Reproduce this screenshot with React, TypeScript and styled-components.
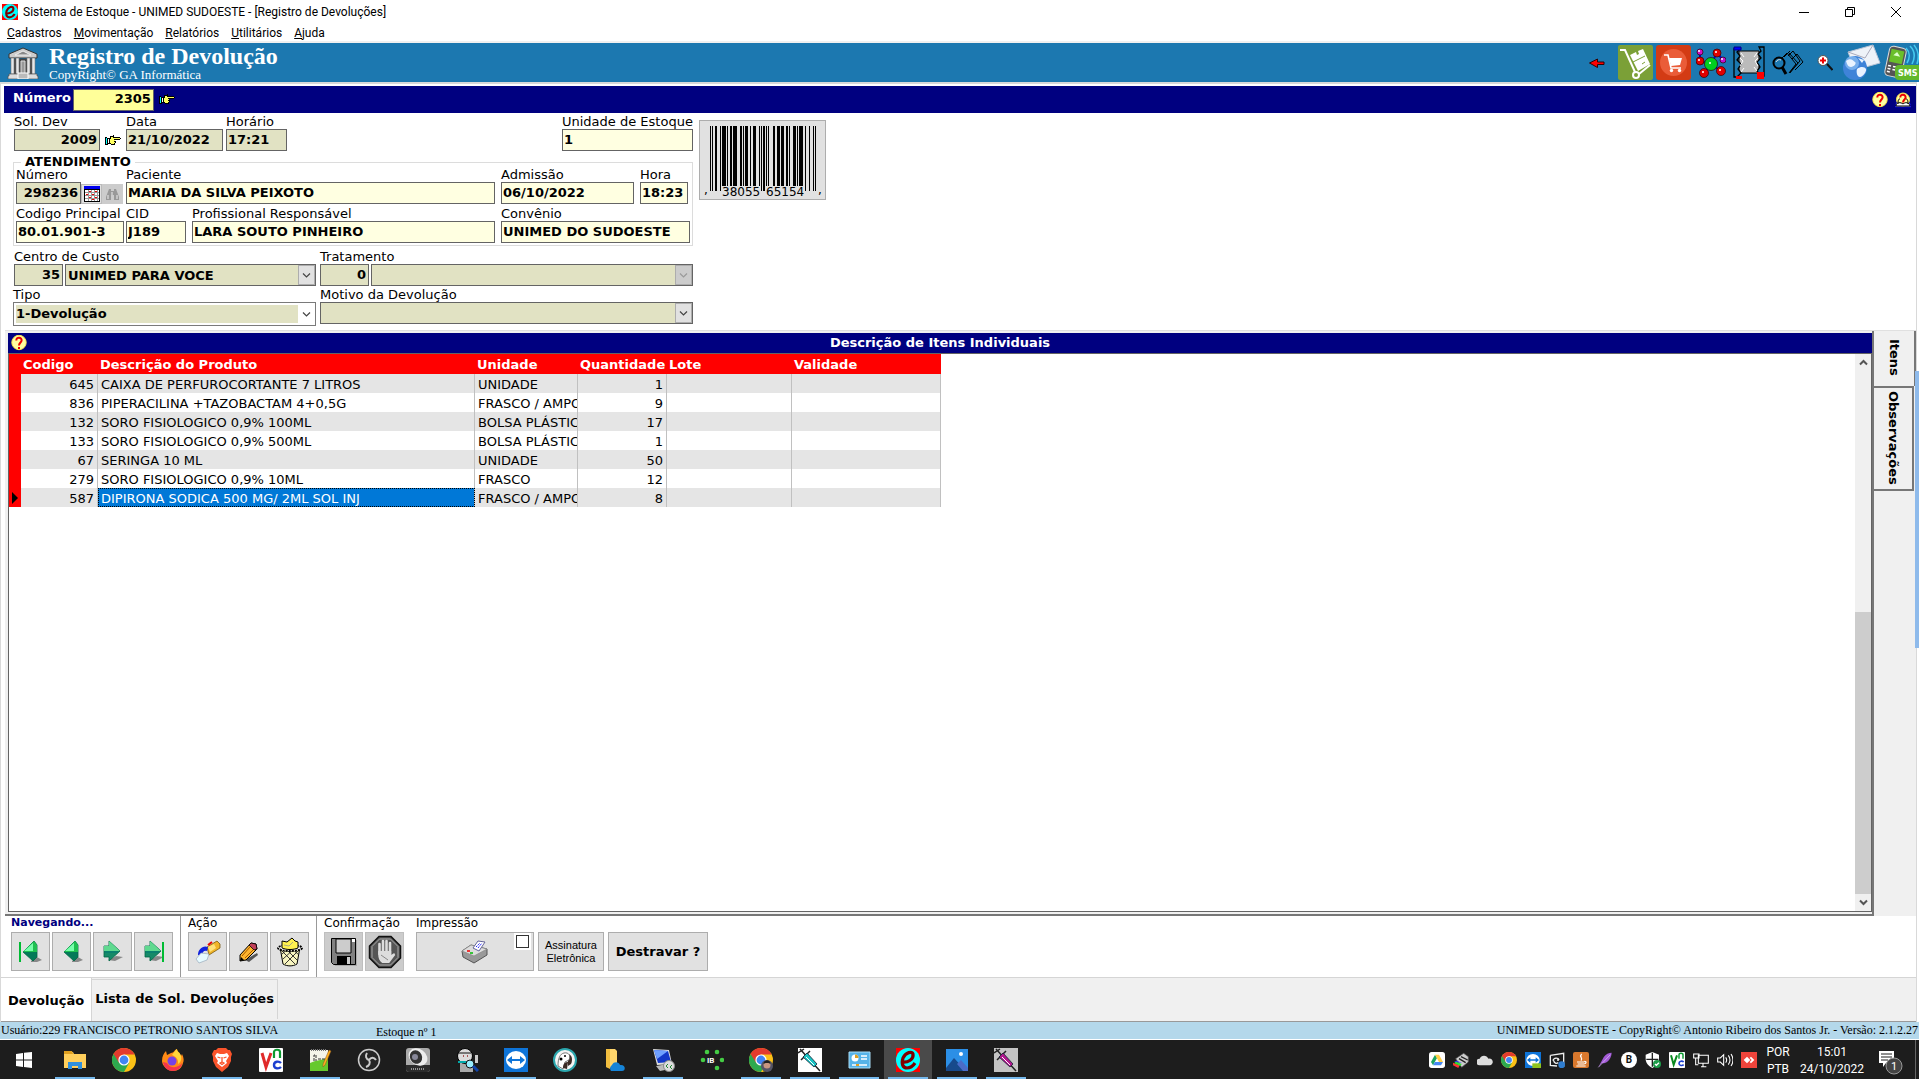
import React, { useId } from 'react';
import styled, { createGlobalStyle, css } from 'styled-components';

const color = {
  navy: '#000080',
  header: '#1c78b0',
  face: '#f0f0f0',
  button: '#e1e1e1',
  edge: '#adadad',
  fieldEdge: '#646464',
  readOnly: '#e1e2c3',
  pale: '#ffffe1',
  status: '#b4d8eb',
};

const GlobalStyle = createGlobalStyle`
  * { box-sizing: border-box; }
  body { margin: 0; background: #fff; color: #000; font: 13px/15px Verdana, "DejaVu Sans", sans-serif; }
  button, input, select { font: inherit; color: inherit; margin: 0; border-radius: 0; }
  svg { display: block; flex: none; }
`;

const Window = styled.div`
  display: flex;
  flex-direction: column;
  height: 100vh;
  min-height: 720px;
  overflow: hidden;
`;

/* ---------- title and menu ---------- */
const TitleBar = styled.header`
  display: flex;
  align-items: center;
  gap: 5px;
  height: 23px;
  padding-left: 2px;
  font: 12px/16px "Segoe UI", Roboto, sans-serif;
`;
const WindowButtons = styled.div`
  display: flex;
  margin-left: auto;
`;
const WindowButton = styled.button`
  display: grid;
  place-items: center;
  width: 46px;
  height: 21px;
  padding: 0;
  border: 0;
  background: none;
`;
const MenuBar = styled.nav`
  display: flex;
  gap: 12px;
  height: 20px;
  padding: 2px 7px;
  border-bottom: 2px solid ${color.face};
  font: 12px/16px "Segoe UI", Roboto, sans-serif;
`;
const MenuLink = styled.a`
  color: #000;
  text-decoration: none;
  &::first-letter { text-decoration: underline; }
  display: inline-block;
`;

/* ---------- blue banner ---------- */
const Banner = styled.div`
  display: flex;
  align-items: center;
  gap: 10px;
  height: 39px;
  flex: none;
  padding-left: 7px;
  background: ${color.header};
  color: #fff;
  font-family: "Liberation Serif", "Times New Roman", serif;
`;
const BannerTitle = styled.h1`
  margin: 0;
  font-size: 24px;
  line-height: 24px;
`;
const BannerNote = styled.p`
  margin: 0;
  font-size: 13px;
  line-height: 13px;
`;
const BannerTools = styled.div`
  display: flex;
  align-items: center;
  margin-left: auto;
`;
const ToolButton = styled.button<{ $w: number }>`
  display: grid;
  place-items: center;
  width: ${p => p.$w}px;
  height: 37px;
  padding: 0;
  border: 0;
  background: none;
`;

/* ---------- document ---------- */
const Document = styled.main`
  position: relative;
  display: flex;
  flex-direction: column;
  flex: 1;
  min-height: 0;
  margin-right: 2px;
  padding-top: 2px;
  border: solid #d9d9d9;
  border-width: 2px 1px 0;
`;
const NumberBar = styled.div`
  display: flex;
  align-items: center;
  gap: 2px;
  height: 27px;
  flex: none;
  margin: 0 0 0 3px;
  padding: 0 5px 0 9px;
  background: ${color.navy};
  color: #fff;
  font-weight: bold;
`;
const NumberLabel = styled.label`
  padding-bottom: 4px;
`;
const HelpButtons = styled.div`
  display: flex;
  gap: 7px;
  margin-left: auto;
`;
const NumberInput = styled.input`
  width: 81px;
  height: 22px;
  padding: 0 2px 2px;
  border: 1px solid ${color.fieldEdge};
  background: #ffff99;
  color: #000;
  font-weight: bold;
  text-align: right;
`;
const IconButton = styled.button<{ $w?: number }>`
  display: grid;
  place-items: center;
  height: 22px;
  width: ${p => p.$w ?? 16}px;
  padding: 0;
  border: 0;
  background: none;
`;

const FormArea = styled.div`
  display: flex;
  gap: 6px;
  padding: 1px 0 4px 12px;
`;
const Form = styled.form`
  width: 680px;
`;
const Row = styled.div<{ $gap?: number; $top?: number; $indent?: number; $hang?: boolean }>`
  display: flex;
  align-items: ${p => (p.$hang ? 'flex-start' : 'flex-end')};
  gap: ${p => p.$gap ?? 3}px;
  padding-top: ${p => p.$top ?? 0}px;
  padding-left: ${p => p.$indent ?? 0}px;
`;
const FieldBox = styled.div<{ $w: number; $end?: boolean }>`
  display: flex;
  flex-direction: column;
  width: ${p => p.$w}px;
  ${p => p.$end && css`margin-left: auto;`}
`;
const Label = styled.label`
  height: 15px;
  line-height: 15px;
  white-space: nowrap;
`;
const fieldLook = css<{ $tone?: 'pale' }>`
  height: 22px;
  border: 1px solid ${color.fieldEdge};
  background: ${p => (p.$tone === 'pale' ? color.pale : color.readOnly)};
  font-weight: bold;
`;
const TextInput = styled.input<{ $tone?: 'pale'; $right?: boolean }>`
  ${fieldLook}
  width: 100%;
  padding: 0 2px 2px 1px;
  text-align: ${p => (p.$right ? 'right' : 'left')};
`;
const ComboBox = styled.span<{ $w: number }>`
  display: grid;
  width: ${p => p.$w}px;
`;
const Select = styled.select<{ $open?: boolean }>`
  ${fieldLook}
  grid-area: 1 / 1;
  width: 100%;
  padding: 0 2px;
  appearance: none;
  opacity: 1;
  color: #000;
  ${p => p.$open && css`
    height: 24px;
    padding: 0 2px 2px;
    border: 1px solid #7a7a7a;
    background: linear-gradient(90deg, ${color.readOnly} calc(100% - 17px), #fff 0);
    box-shadow: inset 0 0 0 2px #fff;
  `}
`;
const ComboArrow = styled.span<{ $flat?: boolean; $off?: boolean }>`
  grid-area: 1 / 1;
  justify-self: end;
  align-self: center;
  display: grid;
  place-items: center;
  width: 17px;
  height: 20px;
  margin-right: 1px;
  border: ${p => (p.$flat ? '0' : `1px solid ${color.edge}`)};
  background: ${p => (p.$flat ? '#fff' : p.$off ? '#ccc' : color.button)};
  color: ${p => (p.$off ? '#9a9a9a' : '#444')};
  pointer-events: none;
`;
const Group = styled.fieldset`
  min-width: 0;
  margin: 6px 0 0;
  padding: 0 2px 2px;
  border: 1px solid #dcdcdc;
`;
const Legend = styled.legend`
  margin-left: 5px;
  padding: 0 4px;
  line-height: 10px;
  font-weight: bold;
`;
const SmallButton = styled.button<{ $off?: boolean }>`
  display: grid;
  place-items: center;
  width: 21px;
  height: 20px;
  padding: 0;
  border: ${p => (p.$off ? '0' : '1px solid #bbb')};
  background: ${p => (p.$off ? '#ccc' : color.button)};
`;
const Joined = styled.div`
  display: flex;
  align-items: flex-end;
`;
const BarcodeButton = styled.button`
  width: 127px;
  height: 80px;
  margin-top: 6px;
  padding: 0;
  border: 1px solid ${color.edge};
  background: ${color.button};
`;

/* ---------- item panel ---------- */
const ItemPanel = styled.section`
  display: flex;
  flex: 1;
  min-height: 0;
  margin-left: 4px;
  border-top: 1px solid #e0e0e0;
  background: ${color.face};
`;
const ItemPage = styled.div`
  display: flex;
  flex-direction: column;
  flex: 1;
  min-width: 0;
  padding: 2px 0 2px 3px;
  border-right: 2px solid #777;
  border-bottom: 2px solid #777;
`;
const PanelHead = styled.div`
  display: flex;
  align-items: center;
  height: 20px;
  flex: none;
  padding: 0 3px;
  background: ${color.navy};
  color: #fff;
`;
const PanelTitle = styled.h2`
  flex: 1;
  margin: 0 16px 0 0;
  font-size: 13px;
  line-height: 20px;
  text-align: center;
`;
const GridBox = styled.div`
  display: flex;
  flex: 1;
  min-height: 0;
  border: 1px solid #646464;
  background: #fff;
`;
const GridScroll = styled.div`
  flex: 1;
  min-width: 0;
  overflow: hidden;
`;
const Table = styled.table`
  table-layout: fixed;
  width: 932px;
  border-collapse: separate;
  border-spacing: 0;
`;
const HeadCell = styled.th`
  height: 20px;
  padding: 0 0 0 2px;
  background: #f00;
  color: #fff;
  text-align: left;
  white-space: nowrap;
`;
const BodyRow = styled.tr`
  &:nth-child(odd) { background: #e5e5e5; }
`;
const Marker = styled.td`
  padding: 0 3px;
  background: #f00;
`;
const Cell = styled.td<{ $right?: boolean; $selected?: boolean }>`
  height: 19px;
  padding: 1px 3px 0;
  border-right: 1px solid #c0c0c0;
  overflow: hidden;
  white-space: nowrap;
  text-align: ${p => (p.$right ? 'right' : 'left')};
  ${p => p.$selected && css`
    background: #0078d7;
    color: #fff;
    outline: 1px dotted #000;
    outline-offset: -1px;
  `}
`;
const ScrollBar = styled.div`
  display: flex;
  flex-direction: column;
  width: 16px;
  background: ${color.face};
`;
const ScrollButton = styled.button`
  display: grid;
  place-items: center;
  height: 17px;
  padding: 0;
  border: 0;
  background: none;
  color: #555;
`;
const ScrollTrack = styled.div`
  display: flex;
  flex-direction: column;
  justify-content: flex-end;
  flex: 1;
`;
const ScrollThumb = styled.div`
  height: 54%;
  background: #cdcdcd;
`;
const SideTabs = styled.div`
  display: flex;
  flex-direction: column;
  align-items: flex-start;
  width: 42px;
`;
const SideTab = styled.button<{ $active?: boolean }>`
  width: ${p => (p.$active ? 42 : 40)}px;
  height: ${p => (p.$active ? 55 : 105)}px;
  padding: 0 0 2px;
  border: solid #777;
  border-width: ${p => (p.$active ? '0 2px 0 0' : '2px 2px 2px 0')};
  background: ${color.face};
  font-weight: bold;
  writing-mode: vertical-rl;
  text-align: center;
`;
const EdgeHandle = styled.div`
  position: absolute;
  right: -3px;
  top: 287px;
  width: 4px;
  height: 277px;
  background: #8ebaeb;
`;

/* ---------- bottom tool strip ---------- */
const ToolStrip = styled.div`
  display: flex;
  height: 61px;
  flex: none;
  margin-left: 3px;
`;
const ToolGroup = styled.section<{ $w?: number; $line?: boolean }>`
  width: ${p => (p.$w ? `${p.$w}px` : 'auto')};
  padding-left: 7px;
  ${p => p.$line && css`border-left: 1px solid #999;`}
`;
const ToolLabel = styled.h3<{ $navy?: boolean }>`
  margin: 0;
  padding-bottom: 2px;
  font-size: ${p => (p.$navy ? 11 : 12)}px;
  line-height: 14px;
  font-weight: ${p => (p.$navy ? 'bold' : 'normal')};
  color: ${p => (p.$navy ? color.navy : '#000')};
`;
const ToolRow = styled.div<{ $gap?: number }>`
  display: flex;
  gap: ${p => p.$gap ?? 2}px;
`;
const Square = styled.button<{ $w?: number; $off?: boolean; $small?: boolean }>`
  display: grid;
  place-items: center;
  width: ${p => p.$w ?? 39}px;
  height: 39px;
  padding: 0;
  border: 1px solid ${p => (p.$off ? '#bfbfbf' : color.edge)};
  background: ${p => (p.$off ? '#ccc' : color.button)};
  font-weight: ${p => (p.$small ? 'normal' : 'bold')};
  ${p => p.$small && css`font: 11px/13px "Liberation Sans", Arial, sans-serif;`}
`;
const PrintBox = styled.div`
  display: grid;
  & > * { grid-area: 1 / 1; }
`;
const PrintCheck = styled.input`
  appearance: none;
  justify-self: end;
  width: 13px;
  height: 13px;
  margin: 3px 5px 0 0;
  border: 1px solid #333;
  background: #fff;
  outline: 2px solid #fff;
`;

/* ---------- page tabs and status ---------- */
const PageTabs = styled.div`
  display: flex;
  height: 45px;
  flex: none;
  border-top: 1px solid #d5d5d5;
  border-bottom: 1px solid #999;
  background: ${color.face};
`;
const PageTab = styled.button<{ $active?: boolean }>`
  height: ${p => (p.$active ? 43 : 40)}px;
  margin-top: ${p => (p.$active ? 0 : 1)}px;
  padding: ${p => (p.$active ? '2px 7px 0' : '0 3px 2px')};
  border: solid #d5d5d5;
  border-width: ${p => (p.$active ? '0 1px 0 0' : '1px 1px 0 0')};
  background: ${p => (p.$active ? '#fff' : color.face)};
  font-weight: bold;
`;
const StatusBar = styled.footer`
  display: flex;
  height: 18px;
  flex: none;
  padding: 0 1px;
  border-bottom: 1px solid #fff;
  background: ${color.status};
  font: 12px/16px "Liberation Serif", "Times New Roman", serif;
`;
const StatusUser = styled.span`
  width: 375px;
`;
const StatusMid = styled.span`
  flex: 1;
  padding-top: 2px;
`;

/* ---------- taskbar ---------- */
const TaskBar = styled.nav`
  display: flex;
  height: 39px;
  flex: none;
  background: #1d1d1d;
  color: #fff;
  font: 12px/16px "Segoe UI", Roboto, sans-serif;
`;
const TaskList = styled.div`
  display: flex;
  gap: 1px;
  flex: 1;
`;
const Task = styled.button<{ $running?: boolean; $active?: boolean }>`
  display: grid;
  place-items: center;
  width: 48px;
  height: 39px;
  padding: 1px 0 0;
  border: 0;
  background: ${p => (p.$active ? '#4a4a4a' : 'none')};
  &:first-child { margin-right: 2px; }
  ${p => p.$running && css`
    background: linear-gradient(#76b9ed, #76b9ed) center bottom / 40px 2px no-repeat ${p.$active ? ', #4a4a4a' : ''};
  `}
`;
const Tray = styled.div`
  display: flex;
  align-items: center;
  gap: 8px;
`;
const TrayText = styled.div<{ $w: number }>`
  width: ${p => p.$w}px;
  padding-top: 2px;
  text-align: center;
  line-height: 17px;
`;
const Notice = styled.button`
  width: 43px;
  height: 39px;
  padding: 4px 0 0 5px;
  border: 0;
  border-right: 1px solid #666;
  margin-right: 3px;
  background: none;
`;

/* ---------- drawings ---------- */
const Chevron = ({ up, size = 9 }: { up?: boolean; size?: number }) => (
  <svg width={size} height={size} viewBox="0 0 9 9">
    <path d={up ? 'M1 6.5 4.5 3 8 6.5' : 'M1 2.5 4.5 6 8 2.5'} fill="none" stroke="currentColor" strokeWidth={up === undefined ? 1.2 : 2} />
  </svg>
);
const AppIcon = ({ size }: { size: number }) => (
  <svg width={size} height={size} viewBox="0 0 24 24">
    <path fill="#f00" d="M0 0h24v24H0z" />
    <circle cx="12" cy="12" r="12" fill="#0ff" />
    <path d="M6 14c6 1 12-3 11-8-1-3-7-2-10 4-2 6 0 10 4 10 3 0 6-2 8-5" fill="none" stroke="#800000" strokeWidth="3.200" />
  </svg>
);
const Hand = () => (
  <svg width="16" height="11" viewBox="0 0 16 11" shapeRendering="crispEdges">
    <path fill="#000" d="M0 2h2v1h3V1h3V0h1v2h6v1h1v1h-1v1h-5v1h1v2h-1v2H6V9H3v1H0z" />
    <path fill="#0ff" d="M1 3h1v6H1z" />
    <path fill="#fff" d="M3 4h1v4H3z" />
    <path fill="#ffff60" d="M5 4h1V2h2v1h7v1H9v1h1v1H9v1h1v1H9v1H6V8H5z" />
  </svg>
);
const Help = ({ book }: { book?: boolean }) => (
  <svg width="16" height="16" viewBox="0 0 16 16">
    {book && <path d="M2 9h12l2 6H0z" fill="#fff" stroke="#00c" />}
    <circle cx="8" cy="7.5" r={book ? 6.5 : 7.2} fill="#ffffa0" stroke="#ffe94a" />
    {book && <path d="M1 14c0-4 5-4 7-2 2-2 6-2 7 2z" fill="#fff" stroke="#000" />}
    {book && <path d="M3 12c0-5 1-5 2-5M13 12c0-5-1-5-2-5" fill="none" stroke="#000" />}
    <path d="M5.300 5.500c0-4 5.600-3.500 5.300 0C10.500 7.500 8 7.500 8 10.500" fill="none" stroke="#e00" strokeWidth="2" />
    {!book && <path d="M7 12h2v2H7z" fill="#e00" />}
  </svg>
);
const Temple = () => (
  <svg width="32" height="32" viewBox="0 0 32 32">
    <path d="M16 1 30 7v4H2V7z" fill="#ccc" stroke="#333" />
    <path d="m8 8 8-4 8 4z" fill="#888" stroke="#eee" />
    <path d="M4 12h24v15H4z" fill="#444" />
    {[4, 9, 20, 25].map(x => <path key={x} d={`M${x} 11h3v16h-3z`} fill="#e8e8e8" stroke="#777" strokeWidth=".6" />)}
    <path d="M14 14h4v13h-4z" fill="#999" stroke="#ddd" />
    <path d="M2 27h28v2h1v3H1v-3h1z" fill="#ddd" stroke="#555" strokeWidth=".7" />
    <path d="M11 26h10v6H11z" fill="#bbb" stroke="#fff" />
  </svg>
);
const RedArrow = () => (
  <svg width="16" height="10" viewBox="0 0 16 10"><path d="m.5 5 8-4v3h6.500v2.500H8.500V9.500z" fill="#f00" stroke="#300" /></svg>
);
const Trolley = () => (
  <svg width="35" height="35" viewBox="0 0 35 35">
    <rect width="35" height="35" rx="2" fill="#7ba037" />
    <path d="M2 5h5l10 22M21 29l11-9" fill="none" stroke="#fff" strokeWidth="2" />
    <circle cx="18" cy="30" r="3" fill="#7ba037" stroke="#fff" strokeWidth="2" />
    <path d="m12 10 6-3 1 3 2-1-1-3 5-2 7 15-12 7z" fill="#fff" />
    <path d="m15 17 12-6M24 19l3-2" stroke="#7ba037" />
  </svg>
);
const Cart = () => (
  <svg width="35" height="35" viewBox="0 0 35 35">
    <rect width="35" height="35" rx="3" fill="#d33b14" />
    <circle cx="17.500" cy="17.500" r="13.500" fill="#ea5c38" />
    <path d="M8 10h4l3 13h10" fill="none" stroke="#fff" strokeWidth="1.600" />
    <path d="M13 13h13l-2 7-9 1z" fill="#fff" /><circle cx="15.500" cy="25.500" r="1.700" fill="#fff" /><circle cx="23.500" cy="25.500" r="1.700" fill="#fff" />
  </svg>
);
const balls: [number, number, number, string][] = [
  [4, 4, 3, '#d010c0'], [21, 5, 4, '#e00000'], [27, 12, 3, '#c010d0'], [4, 13, 4, '#e00000'],
  [15, 16, 6.5, '#00d020'], [8, 25, 4.5, '#e00000'], [25, 23, 4.5, '#e00000'],
];
const Molecule = () => (
  <svg width="30" height="30" viewBox="0 0 30 30">
    <path d="M4 5v8l11 3 6-11 6 7M8 25l7-9 10 7" fill="none" stroke="#00c" strokeWidth="2" />
    {balls.map(([x, y, r, c]) => <g key={`${x}-${y}`}><circle cx={x} cy={y} r={r} fill={c} stroke="#300" strokeWidth=".7" /><circle cx={x - 1} cy={y - 1} r="1" fill="#fff" /></g>)}
  </svg>
);
const Frame = () => (
  <svg width="32" height="33" viewBox="0 0 32 33">
    <path d="M6 5h20v22H6z" fill="#bbb" stroke="#000" />
    <path d="M1 3v28h3l4-4-3-4 3-5-4-4 3-4-3-4 3-3zM31 1v29h-3l-4-5 3-4-3-5 4-4-3-4 3-3-2-4z" fill="#1c78b0" stroke="#000" strokeWidth="1.300" />
    <path d="m7 12 3 3-3 5M25 12l-3 3 3 5M8 7l3 4M24 7l-3 4M8 26l3-4M24 25l-3-4" fill="none" stroke="#fff" />
    <path d="M1 1h7v3H1z" fill="#00f" stroke="#008" /><path d="M3 30h6v3H3zM24 26h7v7h-7z" fill="#f00" />
  </svg>
);
const PaperSearch = () => (
  <svg width="32" height="26" viewBox="0 0 32 26" stroke="#000">
    <path d="m20 9 5-5 6 8-8 8M16 6l5-5 7 10-10 11" fill="none" />
    <path d="m17 3 9 10-8 10M12 7l6-6" fill="none" />
    <path d="m10 8 5-5 9 11-7 9" fill="none" />
    <circle cx="7" cy="13" r="5.500" fill="#1c78b0" strokeWidth="2" /><path d="M4 12c1-2 3-3 5-2" stroke="#ddd" fill="none" /><path d="m10 17 4 7" strokeWidth="3" />
  </svg>
);
const ZoomIcon = () => (
  <svg width="16" height="16" viewBox="0 0 16 16">
    <circle cx="6" cy="5.500" r="5" fill="#fff" stroke="#555" /><path d="M6 2.500v6M3 5.500h6" stroke="#e00" strokeWidth="2" /><path d="m10 9 5.500 6" stroke="#111" strokeWidth="2" />
  </svg>
);
const GlobeMail = () => (
  <svg width="40" height="37" viewBox="0 0 40 37">
    <path d="m6 8 25-7 7 18-25 7z" fill="#eef2f8" stroke="#b9c4d6" /><path d="m6 8 17 6 8-13" fill="none" stroke="#aab" />
    <circle cx="13" cy="24" r="12" fill="#3f83d8" /><circle cx="10" cy="19" r="7" fill="#8fc0f5" opacity=".7" />
    <path d="M4 17c5-4 7 0 9 1s-1 5-4 5-4-3-5-6zm11 8c4-3 8-2 9 0s-3 8-6 8-4-5-3-8zM16 14l6 2-2 3z" fill="#e9f3ff" />
  </svg>
);
const Sms = () => (
  <svg width="37" height="37" viewBox="0 0 37 37">
    <g transform="rotate(12 14 18)"><rect x="5" y="3" width="17" height="30" rx="4" fill="#555" stroke="#ddd" /><path d="M7 6h13v13H7z" fill="#6abf2a" /><path d="m13 8 4 4h-7z" fill="#dfc" />
      <path d="M7 23h3m2 0h3m2 0h3M7 26h3m2 0h3M7 29h3" stroke="#fff" strokeWidth="1.500" /></g>
    <path d="M24 4c4 4 4 10 1 15M28 2c5 5 5 12 2 18M32 1c5 6 5 13 3 19" fill="none" stroke="#45c9ee" strokeWidth="1.600" />
    <path d="M17 21h20v15H17q-4 0-4-4v-7q0-4 4-4z" fill="#62b82b" />
    <text x="16" y="32" fontSize="8" fontWeight="bold" fill="#fff" fontFamily="DejaVu Sans, sans-serif">SMS</text>
  </svg>
);
const CalendarIcon = () => (
  <svg width="16" height="16" viewBox="0 0 16 16" shapeRendering="crispEdges">
    <path fill="#000" d="M0 0h16v16H0z" /><path fill="#00e" d="M0 0h16v3H0z" /><path fill="#fff" d="M1 4h14v11H1z" />
    {[6, 9, 12].map(y => <path key={y} d={`M1 ${y}.5h14`} stroke="#999" />)}
    {[4, 7, 10, 13].map(x => <path key={x} d={`M${x}.5 4v11`} stroke="#999" />)}
    {[[5, 5], [11, 5], [2, 8], [8, 8], [11, 11], [5, 11], [8, 13]].map(([x, y]) => <path key={`${x}-${y}`} d={`M${x} ${y}h2v1h-2z`} fill="#e00" />)}
  </svg>
);
const Binoculars = () => (
  <svg width="13" height="11" viewBox="0 0 13 11"><path d="M3 0h2v2h3V0h2l3 8v3H8V6H5v5H0V8z" fill="#999" /><path d="M2 6v4M11 6v4M6 3v3" stroke="#eee" /></svg>
);
const bars = [
  [1, 1], [3, 1], [6, 2], [11, 1], [13, 4], [18, 1], [21, 2], [24, 4], [31, 2], [34, 1], [36, 3], [41, 1], [44, 3], [50, 1], [52, 1], [54, 2], [57, 1], [59, 1],
  [64, 2], [68, 3], [72, 3], [77, 2], [80, 1], [84, 3], [88, 1], [90, 4], [96, 1], [100, 1], [104, 1], [106, 1],
];
const Barcode = () => (
  <svg width="125" height="78" viewBox="0 0 125 78" shapeRendering="crispEdges">
    {bars.map(([x, w]) => <path key={x} d={`M${x + 9} 5h${w}v${x < 12 || x > 95 || (x > 51 && x < 56) ? 65 : 60}h${-w}z`} />)}
    <g fontFamily="DejaVu Sans, sans-serif" fontSize="12"><text x="22" y="75">38055</text><text x="66" y="75">65154</text><text x="4" y="73">,</text><text x="118" y="73">,</text></g>
  </svg>
);
const NavArrow = ({ dir, end }: { dir: 'l' | 'r'; end?: boolean }) => (
  <svg width="26" height="24" viewBox="0 0 26 24">
    <path d={dir === 'l' ? 'M13 21l6-4 5 3-5 2h-6z' : 'M8 20l8-4 7 1-8 4z'} fill="#888" />
    {dir === 'l'
      ? <><path d="M5 12 16 1l3 4v12l-4 4z" fill="#047a58" stroke="#064" strokeWidth=".8" /><path d="M5 12 16 1l3 4v7z" fill="#1fc050" /><path d="m6 11 9-8v8z" fill="#7fa" /></>
      : <><path d="M20 11 9 1v5H4v11h5v4z" fill="#158a68" stroke="#064" strokeWidth=".8" /><path d="M20 11H4V6h5V1z" fill="#5fd98f" /><path d="M5 12h13" stroke="#077" /></>}
    {end && <path d={dir === 'l' ? 'M2 2v20' : 'M22 2v20'} stroke="#0b3" strokeWidth="2" />}
  </svg>
);
const NewIcon = () => (
  <svg width="28" height="26" viewBox="0 0 28 26">
    <path d="m13 8 10-6 3 3v4l-11 7z" fill="#f0b429" stroke="#6b4a00" strokeWidth=".7" /><path d="m14 8 6-3 2 4-6 4z" fill="#ffe27a" /><path d="m14 6 4-3" stroke="#e00" strokeWidth="2" />
    <path d="M4 16c0-6 5-10 10-8l-1 4c-3-1-5 1-5 5z" fill="#12d" /><path d="m2 20 5-6 8 1-2 6-8 3z" fill="#e7fbff" stroke="#9ab" strokeWidth=".7" />
  </svg>
);
const PencilIcon = () => (
  <svg width="24" height="24" viewBox="0 0 24 24">
    <path d="m8 20 12-7 1 2-9 7z" fill="#555" /><path d="M3 15 14 3l5 1 1 5L9 20l-6 1z" fill="#ffb52e" stroke="#000" />
    <path d="M14 3l5 1 1 5-3 1-5-5z" fill="#c0405a" stroke="#000" strokeWidth=".8" /><path d="m5 16 8-9M8 18l8-8" stroke="#a85a00" /><path d="m3 21 1-4 3 3z" fill="#000" />
  </svg>
);
const BinIcon = () => (
  <svg width="28" height="30" viewBox="0 0 28 30">
    <path d="M4 10h20l-3 17c-4 2.500-10 2.500-14 0z" fill="#f8f5c0" stroke="#000" />
    <path d="m5 13 14 14M9 11l12 12M15 11l8 7M23 13 9 27M19 11 7 22M13 11l-7 6" stroke="#222" strokeWidth=".9" /><ellipse cx="14" cy="11" rx="12" ry="3" fill="#fff" stroke="#000" strokeWidth="2" strokeDasharray="2 1" />
    <path d="M6 11V4l5 1 5-4 3 3 3 1v6c-5 2-11 2-16 0z" fill="#fff250" stroke="#000" /><path d="m8 8 5 1 4-4" fill="none" stroke="#aa8" />
  </svg>
);
const DiskIcon = () => (
  <svg width="26" height="28" viewBox="0 0 26 28"><path d="M2 2h24v26H4z" fill="#aaa" /><path d="M.5.500h24v26h-22l-2-2z" fill="#808080" stroke="#000" /><path d="M5 1h15v14H5z" fill="#ccc" stroke="#000" /><path d="M21 1h3v3h-3z" fill="#fff" /><path d="M6 18h14v9H6z" /><path d="M16 19h3v7h-3z" fill="#ccc" /></svg>
);
const StopIcon = () => (
  <svg width="34" height="34" viewBox="0 0 34 34">
    <path d="M11 1.500h12L32.500 11v12L23 32.500H11L1.500 23V11z" fill="#555" stroke="#111" strokeWidth="1.500" /><path d="M11.500 4h11L30 11.500v11L22.500 30h-11L4 22.500v-11z" fill="none" stroke="#aaa" />
    <path d="M11.500 19V9M15 18V6M18.500 18V6M22 20V8" stroke="#ddd" strokeWidth="2.600" strokeLinecap="round" /><path d="M10.200 16h13v4l3-2 1 2-6 8h-7c-3-2-4-5-4-9z" fill="#ddd" /><path d="m13 20 7 5" stroke="#888" />
  </svg>
);
const PrinterIcon = () => (
  <svg width="28" height="24" viewBox="0 0 28 24">
    <path d="m1 11 9-6 16 4v6l-13 8L2 17z" fill="#999" stroke="#555" /><path d="m1 11 9-6 16 4-13 7z" fill="#ddd" stroke="#888" strokeWidth=".7" />
    <path d="m12 8 5-7 7 1-6 9z" fill="#fff" stroke="#669" /><path d="m15 7 4-4M17 8l4-5" stroke="#22f" strokeDasharray="2 1" /><path d="M6 11h3" stroke="#e00" strokeWidth="1.500" /><path d="M9 13h3" stroke="#0b0" strokeWidth="1.500" />
  </svg>
);

const ChromeArt = () => (
  <>
    <circle cx="12" cy="12" r="12" fill="#fbc116" />
    <path d="M12 12 1.600 6A12 12 0 0 0 12 24l5-9z" fill="#2da94f" /><path d="M12 6.500h10.600A12 12 0 0 0 1.600 6l5.600 9z" fill="#e33b2e" />
    <circle cx="12" cy="12" r="5.600" fill="#fff" /><circle cx="12" cy="12" r="4.400" fill="#4285f4" />
  </>
);
const VncArt = ({ v }: { v: string }) => (
  <>
    <rect width="24" height="24" rx="1" fill="#fff" />
    <path d="m3 5 4 14 5-14" fill="none" stroke={v} strokeWidth="3" />
    <path d="M15 10V4c0-3 6-3 6 0v6" fill="none" stroke="#0a9a30" strokeWidth="2.200" /><path d="M22 15c-2-2-7-2-7 2s5 4 7 2" fill="none" stroke="#1b3fd0" strokeWidth="2.400" />
  </>
);
const ViewerArt = () => (
  <><path d="M0 0h24v24H0z" fill="#0e74d8" /><ellipse cx="12" cy="12" rx="10" ry="9" fill="#fff" /><path d="m3 12 5-4v3h8V8l5 4-5 4v-3H8v3z" fill="#0e74d8" /></>
);
const SyringeArt = ({ bg, c }: { bg: string; c: string }) => (
  <><path d="M0 0h24v24H0z" fill={bg} /><path d="m2 1 20 22M0 5l6-4M3 12l9-9" stroke="#222" strokeWidth="1.500" /><path d="m5 9 4-4 10 11-3 3z" fill={c} stroke="#123" strokeWidth=".8" /><path d="m8 9 8 8" stroke="#fff" /></>
);
type TaskItem = { name: string; running?: boolean; active?: boolean; art: React.ReactNode };
const tasks: TaskItem[] = [
  { name: 'Iniciar', art: <path d="m4 6 7-1v6.500H4zM12 4.800 20 4v7.500h-8zM4 12.500h7V19l-7-1zM12 12.500h8V20l-8-1z" fill="#fff" /> },
  { name: 'Explorador', running: true, art: <><path d="M1 4h9l1 2h12v14H1z" fill="#ffcf5c" /><path d="M1 3h8l1 3H1z" fill="#e0a020" /><path d="M5 21v-7h14v7h-4v-3H9v3z" fill="#2f8fdd" /></> },
  { name: 'Chrome', art: <ChromeArt /> },
  { name: 'Firefox', art: <><path d="M1 13C1 8 3 5 5 3l1 4 4-2c3 0 3-3 6-4 0 3 3 3 4 7l1-2c2 4 2 7 1 9-1 5-5 8-10 8S1 18 1 13z" fill="#ff8a16" /><path d="M2 14c1 6 5 9 10 9s9-4 9-8c-3 5-12 6-15 0z" fill="#f4364c" /><path d="M16 1c0 3 3 3 4 7s-1 7-3 8c1-5-3-8-6-9 2-2 3-5 5-6z" fill="#ffd63a" /><circle cx="11" cy="13" r="4.500" fill="#7542e5" /></> },
  { name: 'Brave', running: true, art: <><path d="M8 0h8l2 2h2l2 4-1 3 0 4-3 6-6 5-6-5-3-6V9L2 6l2-4h2z" fill="#fb542b" /><path d="m7 5 3 1h4l3-1 2 3-3 5 1 2-5 4-5-4 1-2-3-5z" fill="#fff" /><path d="m7.500 9 3 1M16.500 9l-3 1M12 9v5l-2 1 2 1.500 2-1.500-2-1" stroke="#fb542b" strokeWidth="1.300" fill="none" /></> },
  { name: 'VNC', art: <VncArt v="#e02a2a" /> },
  { name: 'Notepad++', running: true, art: <><path d="M2 2h18v21H2z" fill="#f4f4ea" /><path d="M2 15c6-3 12-3 18-5v13H2z" fill="#66c92d" /><path d="M3 2h16" stroke="#777" strokeWidth="2" strokeDasharray="1 1" /><path d="M6 13V7h2v6m2-2h7" stroke="#333" fill="none" strokeDasharray="3 1" /><path d="m15 16 6-14 2 1-6 14-2 2z" fill="#ffb01f" stroke="#852" strokeWidth=".5" /></> },
  { name: 'OBS', art: <><circle cx="12" cy="12" r="10.500" fill="#252525" stroke="#ccc" strokeWidth="1.500" /><path d="M10 5c-2 3-1 6 2 7M12 12c2-3 5-3 7 0M12 12c2 3 0 6-3 7" fill="none" stroke="#ccc" strokeWidth="2" /></> },
  { name: 'Câmera', art: <><rect width="24" height="24" rx="3" fill="#aaa" /><path d="M0 17h24v4q0 3-3 3H3q-3 0-3-3z" fill="#2c2c2c" /><ellipse cx="12" cy="9" rx="10" ry="8" fill="#eee" transform="rotate(35 12 9)" /><ellipse cx="10" cy="9" rx="6" ry="7" fill="#333" transform="rotate(-25 10 9)" /><circle cx="9" cy="9" r="3" fill="#889" /><path d="M5 21h14" stroke="#fff" strokeDasharray="1 1" /></> },
  { name: 'Pesquisa', art: <><path d="M5 14h13v10H5z" fill="#aaa" /><circle cx="10" cy="8" r="7.500" fill="#ddd" stroke="#000" /><path d="M3 5h13" stroke="#111" /><path d="M8 8h1m3 0h1" stroke="#a55" strokeWidth="2" /><path d="M3 14h10" stroke="#0aa" strokeWidth="2" /><circle cx="15" cy="16" r="4" fill="#9ef" stroke="#111" /><path d="m18 18 5 5" stroke="#14a" strokeWidth="3" /><path d="M20 7h3v8h-3z" fill="#ccc" /></> },
  { name: 'TeamViewer', running: true, art: <ViewerArt /> },
  { name: 'DBeaver', art: <><circle cx="12" cy="12" r="11" fill="#f4f4f4" stroke="#2ba6ad" strokeWidth="2" /><path d="M15 6c4 1 5 5 3 10l-3 2z" fill="#3a2a24" /><path d="M5 18C5 10 7 6 11 5c5-1 7 3 5 7l-4 2-2 7z" fill="#fff" stroke="#555" strokeWidth=".8" /><path d="M10 20c0-4 2-6 5-6l-1 7z" fill="#3a2a24" /><circle cx="8" cy="11" r="1.500" /><circle cx="12" cy="8" r="1" /></> },
  { name: 'OneDrive', art: <><path d="M4 1h9l2 2v18l-11-2z" fill="#ffd56b" /><path d="M4 1h4v20l-4-2z" fill="#f2be3f" /><path d="M9 23a4 4 0 0 1 1-6c2-4 7-3 8 0 6-1 6 6 2 6z" fill="#1684d8" /></> },
  { name: 'Área remota', running: true, art: <><path d="m2 1 16 1 3 14-15 1z" fill="#ddd" /><path d="m3 2 14 1 3 11-13 1z" fill="#1438c8" /><path d="m3 2 14 1-11 8z" fill="#6fa0ff" /><path d="m5 18 12-2 2 5-10 2z" fill="#bbb" /><circle cx="18" cy="18" r="5.500" fill="#ddd" stroke="#888" /><path d="m15 18 2 2m0-4-2 2m6-1-2 2 2 2" stroke="#283" fill="none" /></> },
  { name: 'Rede IB', art: <><g fill="#4c4"><circle cx="7" cy="4" r="2.300" /><circle cx="17" cy="4" r="2.300" /><circle cx="3" cy="12" r="2.300" /><circle cx="22" cy="12" r="2.300" /><circle cx="17" cy="20" r="2.300" /></g><text x="7" y="15" fontSize="8" fontWeight="bold" fill="#fff">IB</text></> },
  { name: 'Chrome perfil', running: true, art: <><ChromeArt /><circle cx="18" cy="18" r="6" fill="#556" /><circle cx="18" cy="17" r="3.500" fill="#c99680" /><path d="M14.500 16c0-5 7-5 7 0l-2-1h-3z" fill="#222" /></> },
  { name: 'Enfermagem', running: true, art: <SyringeArt bg="#fff" c="#19c4c4" /> },
  { name: 'Painel', running: true, art: <><path d="M2 4h21v16H2z" fill="#56b3e8" stroke="#a9def8" /><circle cx="8" cy="10" r="3.500" fill="#fff" /><path d="M8 10V6.500A3.500 3.500 0 0 1 11.500 10z" fill="#e0a020" /><path d="M14 8h6m-6 3h6M5 17h15" stroke="#fff" strokeWidth="1.500" /><path d="M9 17h3" stroke="#e0a020" strokeWidth="2" /></> },
  { name: 'Sistema de Estoque', running: true, active: true, art: <AppIcon size={24} /> },
  { name: 'Fotos', running: true, art: <><path d="M1 1h22v22H1z" fill="#2c8fe6" /><path d="m1 20 8-10 12 13H1z" fill="#174a8c" /><path d="m12 16 4-4 7 8v3h-5z" fill="#4b6cc8" /><circle cx="16" cy="6" r="2" fill="#fff" /></> },
  { name: 'Farmácia', running: true, art: <SyringeArt bg="#c4c4c4" c="#b0178c" /> },
];
const trayIcons: React.ReactNode[] = [
  <><rect width="24" height="24" rx="4" fill="#fff" /><path d="m9 4-6 11 3 5 6-11z" fill="#1da462" /><path d="M9 4h6l6 11h-6z" fill="#ffcf48" /><path d="m6 20 3-5h12l-3 5z" fill="#4688f4" /></>,
  <><path d="m4 10 12-8 7 5v8l-10 8z" fill="#ccc" stroke="#555" /><path d="m9 10 10 6M12 7l10 5" stroke="#222" strokeWidth="2" /><path d="m0 16 10 4-2 4-8-4z" fill="#f33" /><path d="m4 14 9 4-2 3-9-4z" fill="#3d3" /><path d="m1 14 5-1 8 4z" fill="#33f" /></>,
  <><path d="M4 20a5 5 0 0 1 0-10c2-6 11-6 13 0 8-1 9 9 2 10z" fill="#ddd" /></>,
  <ChromeArt />,
  <><ViewerArt /><path d="M11 17h13v7H11z" fill="#8fc31f" /></>,
  <><path d="m2 5 20-3v20M2 5v15l10 1" fill="none" stroke="#eee" strokeWidth="2" /><path d="M6 13c1-5 8-5 9-1m0 0-3 0M7 13c1 4 4 5 7 3" fill="none" stroke="#eee" strokeWidth="2" /><circle cx="19" cy="19" r="5" fill="#2f7dd0" /></>,
  <><rect width="24" height="24" rx="3" fill="#d9782d" /><path d="M13 3c-5 5 3 5-1 10M6 15h11M7 18h9M5 21h14M17 14c4 0 3 4-1 4" fill="none" stroke="#fff" strokeWidth="1.800" /></>,
  <><path d="M2 23 10 8c3-5 8-7 12-7 0 5-3 11-7 14-3 2-6 2-8 2z" fill="#a35cd6" /><path d="M2 23 20 4" stroke="#e3c4ff" /></>,
  <><circle cx="12" cy="12" r="12" fill="#fff" /><text x="7" y="17" fontSize="15" fontWeight="bold" fill="#111">B</text></>,
  <><path d="m11 0 10 4v6c0 7-5 11-10 14C6 21 1 17 1 10V4z" fill="#fff" /><path d="M11 1v21M2 11h18" stroke="#222" strokeWidth="2" /><circle cx="18" cy="18" r="6" fill="#1e9e4a" /><path d="m15 18 2 2 4-4" stroke="#fff" strokeWidth="2" fill="none" /></>,
  <VncArt v="#0a8a20" />,
  <path d="M8 5h15v12H8zM12 22h8M15 17v5M1 3h8v6H1zM4 9v10h4" fill="#1d1d1d" stroke="#fff" strokeWidth="1.600" />,
  <path d="M1 9v6h4l5 5V4L5 9zM13 8q3 4 0 8M17 5q5 7 0 14M21 3q6 9 0 18" fill="none" stroke="#fff" strokeWidth="1.600" />,
  <><path d="M0 0h24v24H0z" fill="#ef443b" /><path d="m9 7 5 5-5 5-5-5zM15 7l5 5-5 5-2-2 3-3-3-3z" fill="#fff" /></>,
];

/* ---------- small composed parts ---------- */
type FieldProps = { label: string; value: string; w: number; pale?: boolean; right?: boolean; end?: boolean };
function Field({ label, value, w, pale, right, end }: FieldProps) {
  const id = useId();
  return (
    <FieldBox $w={w} $end={end}>
      <Label htmlFor={id}>{label}</Label>
      <TextInput id={id} defaultValue={value} $tone={pale ? 'pale' : undefined} $right={right} />
    </FieldBox>
  );
}
type ComboProps = { id?: string; name?: string; value: string; w: number; open?: boolean; off?: boolean };
function Combo({ id, name, value, w, open, off }: ComboProps) {
  return (
    <ComboBox $w={w}>
      <Select id={id} aria-label={name} $open={open} disabled={off}><option>{value}</option></Select>
      <ComboArrow $flat={open} $off={off}><Chevron /></ComboArrow>
    </ComboBox>
  );
}

const items = [
  ['645', 'CAIXA DE PERFUROCORTANTE 7 LITROS', 'UNIDADE', '1'],
  ['836', 'PIPERACILINA +TAZOBACTAM 4+0,5G', 'FRASCO / AMPOLA', '9'],
  ['132', 'SORO FISIOLOGICO 0,9% 100ML', 'BOLSA PLÁSTICA', '17'],
  ['133', 'SORO FISIOLOGICO 0,9% 500ML', 'BOLSA PLÁSTICA', '1'],
  ['67', 'SERINGA 10 ML', 'UNIDADE', '50'],
  ['279', 'SORO FISIOLOGICO 0,9% 10ML', 'FRASCO', '12'],
  ['587', 'DIPIRONA SODICA 500 MG/ 2ML SOL INJ', 'FRASCO / AMPOLA', '8'],
];
const columns = [12, 77, 377, 103, 89, 125, 149];
const menu = ['Cadastros', 'Movimentação', 'Relatórios', 'Utilitários', 'Ajuda'];
const tools: [string, number, React.ReactNode][] = [
  ['Voltar', 38, <RedArrow />], ['Entrada', 38, <Trolley />], ['Compras', 38, <Cart />], ['Composição', 38, <Molecule />],
  ['Moldura', 38, <Frame />], ['Consultar documentos', 40, <PaperSearch />], ['Ampliar', 34, <ZoomIcon />], ['E-mail', 40, <GlobeMail />], ['SMS', 37, <Sms />],
];

export default function App() {
  return (
    <Window>
      <GlobalStyle />
      <TitleBar>
        <AppIcon size={16} />
        <span>Sistema de Estoque - UNIMED SUDOESTE - [Registro de Devoluções]</span>
        <WindowButtons>
          <WindowButton aria-label="Minimizar"><svg width="10" height="10"><path d="M0 5.500h10" stroke="#000" /></svg></WindowButton>
          <WindowButton aria-label="Restaurar"><svg width="10" height="10" fill="none" stroke="#000"><path d="M.5 2.500h7v7h-7zM2.500 2.500v-2h7v7h-2" /></svg></WindowButton>
          <WindowButton aria-label="Fechar"><svg width="10" height="10"><path d="m0 0 10 10M10 0 0 10" stroke="#000" /></svg></WindowButton>
        </WindowButtons>
      </TitleBar>
      <MenuBar>{menu.map(m => <MenuLink key={m} href="#">{m}</MenuLink>)}</MenuBar>
      <Banner>
        <Temple />
        <div>
          <BannerTitle>Registro de Devolução</BannerTitle>
          <BannerNote>CopyRight© GA Informática</BannerNote>
        </div>
        <BannerTools>
          {tools.map(([name, w, art]) => <ToolButton key={name} $w={w} aria-label={name}>{art}</ToolButton>)}
        </BannerTools>
      </Banner>

      <Document>
        <NumberBar>
          <NumberLabel htmlFor="registro">Número</NumberLabel>
          <NumberInput id="registro" defaultValue="2305" />
          <IconButton $w={22} aria-label="Ir para o registro"><Hand /></IconButton>
          <HelpButtons>
            <IconButton aria-label="Ajuda"><Help /></IconButton>
            <IconButton aria-label="Manual"><Help book /></IconButton>
          </HelpButtons>
        </NumberBar>

        <FormArea>
          <Form>
            <Row $indent={1}>
              <Field label="Sol. Dev" value="2009" w={86} right />
              <IconButton $w={20} type="button" aria-label="Abrir solicitação"><Hand /></IconButton>
              <Field label="Data" value="21/10/2022" w={97} />
              <Field label="Horário" value="17:21" w={61} />
              <Field label="Unidade de Estoque" value="1" w={131} pale end />
            </Row>
            <Group>
              <Legend>ATENDIMENTO</Legend>
              <Row>
                <Joined>
                  <Field label="Número" value="298236" w={65} right />
                  <SmallButton type="button" aria-label="Calendário"><CalendarIcon /></SmallButton>
                  <SmallButton type="button" aria-label="Localizar" $off disabled><Binoculars /></SmallButton>
                </Joined>
                <Row $gap={6}>
                  <Field label="Paciente" value="MARIA DA SILVA PEIXOTO" w={369} pale />
                  <Field label="Admissão" value="06/10/2022" w={133} pale />
                  <Field label="Hora" value="18:23" w={48} pale />
                </Row>
              </Row>
              <Row $top={2} $gap={6}>
                <Row $gap={2}>
                  <Field label="Codigo Principal" value="80.01.901-3" w={108} pale />
                  <Field label="CID" value="J189" w={60} pale />
                </Row>
                <Field label="Profissional Responsável" value="LARA SOUTO PINHEIRO" w={303} pale />
                <Field label="Convênio" value="UNIMED DO SUDOESTE" w={189} pale />
              </Row>
            </Group>
            <Row $top={3} $gap={4} $indent={1}>
              <Row $gap={2}>
                <Field label="Centro de Custo" value="35" w={49} right />
                <Combo name="Centro de Custo" value="UNIMED PARA VOCE" w={251} />
              </Row>
              <Row $gap={2}>
                <Field label="Tratamento" value="0" w={49} right />
                <Combo name="Tratamento" value="" w={322} off />
              </Row>
            </Row>
            <Row $top={1} $gap={4} $hang>
              <FieldBox $w={303}>
                <Label htmlFor="tipo">Tipo</Label>
                <Combo id="tipo" value="1-Devolução" w={303} open />
              </FieldBox>
              <FieldBox $w={373}>
                <Label htmlFor="motivo">Motivo da Devolução</Label>
                <Combo id="motivo" value="" w={373} />
              </FieldBox>
            </Row>
          </Form>
          <BarcodeButton aria-label="Código de barras"><Barcode /></BarcodeButton>
        </FormArea>

        <ItemPanel>
          <ItemPage>
            <PanelHead>
              <IconButton aria-label="Ajuda dos itens"><Help /></IconButton>
              <PanelTitle>Descrição de Itens Individuais</PanelTitle>
            </PanelHead>
            <GridBox>
              <GridScroll>
                <Table>
                  <colgroup>{columns.map((w, i) => <col key={i} width={w} />)}</colgroup>
                  <thead>
                    <tr>
                      <HeadCell /><HeadCell>Codigo</HeadCell><HeadCell>Descrição do Produto</HeadCell><HeadCell>Unidade</HeadCell>
                      <HeadCell>Quantidade</HeadCell><HeadCell>Lote</HeadCell><HeadCell>Validade</HeadCell>
                    </tr>
                  </thead>
                  <tbody>
                    {items.map(([code, text, unit, amount], i) => {
                      const current = i === items.length - 1;
                      return (
                        <BodyRow key={code}>
                          <Marker>{current && <svg width="6" height="12"><path d="m0 0 6 6-6 6z" /></svg>}</Marker>
                          <Cell $right>{code}</Cell>
                          <Cell $selected={current}>{text}</Cell>
                          <Cell>{unit}</Cell>
                          <Cell $right>{amount}</Cell>
                          <Cell /><Cell />
                        </BodyRow>
                      );
                    })}
                  </tbody>
                </Table>
              </GridScroll>
              <ScrollBar>
                <ScrollButton aria-label="Subir"><Chevron up /></ScrollButton>
                <ScrollTrack><ScrollThumb /></ScrollTrack>
                <ScrollButton aria-label="Descer"><Chevron up={false} /></ScrollButton>
              </ScrollBar>
            </GridBox>
          </ItemPage>
          <SideTabs>
            <SideTab $active>Itens</SideTab>
            <SideTab>Observações</SideTab>
          </SideTabs>
        </ItemPanel>

        <ToolStrip>
          <ToolGroup $w={176}>
            <ToolLabel $navy>Navegando...</ToolLabel>
            <ToolRow>
              <Square aria-label="Primeiro"><NavArrow dir="l" end /></Square>
              <Square aria-label="Anterior"><NavArrow dir="l" /></Square>
              <Square aria-label="Próximo"><NavArrow dir="r" /></Square>
              <Square aria-label="Último"><NavArrow dir="r" end /></Square>
            </ToolRow>
          </ToolGroup>
          <ToolGroup $w={136} $line>
            <ToolLabel>Ação</ToolLabel>
            <ToolRow>
              <Square aria-label="Novo"><NewIcon /></Square>
              <Square aria-label="Editar"><PencilIcon /></Square>
              <Square aria-label="Excluir"><BinIcon /></Square>
            </ToolRow>
          </ToolGroup>
          <ToolGroup $w={93} $line>
            <ToolLabel>Confirmação</ToolLabel>
            <ToolRow>
              <Square $off disabled aria-label="Salvar"><DiskIcon /></Square>
              <Square $off disabled aria-label="Cancelar"><StopIcon /></Square>
            </ToolRow>
          </ToolGroup>
          <ToolGroup>
            <ToolLabel>Impressão</ToolLabel>
            <ToolRow $gap={4}>
              <PrintBox>
                <Square $w={118} aria-label="Imprimir"><PrinterIcon /></Square>
                <PrintCheck type="checkbox" aria-label="Imprimir ao salvar" />
              </PrintBox>
              <Square $w={66} $small>Assinatura Eletrônica</Square>
              <Square $w={100}>Destravar ?</Square>
            </ToolRow>
          </ToolGroup>
        </ToolStrip>
        <PageTabs>
          <PageTab $active>Devolução</PageTab>
          <PageTab>Lista de Sol. Devoluções</PageTab>
        </PageTabs>
        <EdgeHandle />
      </Document>

      <StatusBar>
        <StatusUser>Usuário:229 FRANCISCO PETRONIO SANTOS SILVA</StatusUser>
        <StatusMid>Estoque nº 1</StatusMid>
        <span>UNIMED SUDOESTE - CopyRight© Antonio Ribeiro dos Santos Jr. - Versão: 2.1.2.27</span>
      </StatusBar>

      <TaskBar>
        <TaskList>
          {tasks.map(t => (
            <Task key={t.name} aria-label={t.name} $running={t.running} $active={t.active}>
              <svg width="24" height="24" viewBox="0 0 24 24">{t.art}</svg>
            </Task>
          ))}
        </TaskList>
        <Tray>
          {trayIcons.map((art, i) => <svg key={i} width="16" height="16" viewBox="0 0 24 24">{art}</svg>)}
          <TrayText $w={26}>POR<br />PTB</TrayText>
          <TrayText $w={66}>15:01<br />24/10/2022</TrayText>
          <Notice aria-label="Notificações">
            <svg width="26" height="26" viewBox="0 0 26 26">
              <path d="M1 2h15v12H8l-3 4v-4H1z" fill="#fff" /><path d="M3 5h11M3 8h11M3 11h7" stroke="#1d1d1d" />
              <circle cx="16" cy="17" r="8" fill="#444" stroke="#999" /><text x="13" y="21" fontSize="11" fill="#fff">1</text>
            </svg>
          </Notice>
        </Tray>
      </TaskBar>
    </Window>
  );
}
